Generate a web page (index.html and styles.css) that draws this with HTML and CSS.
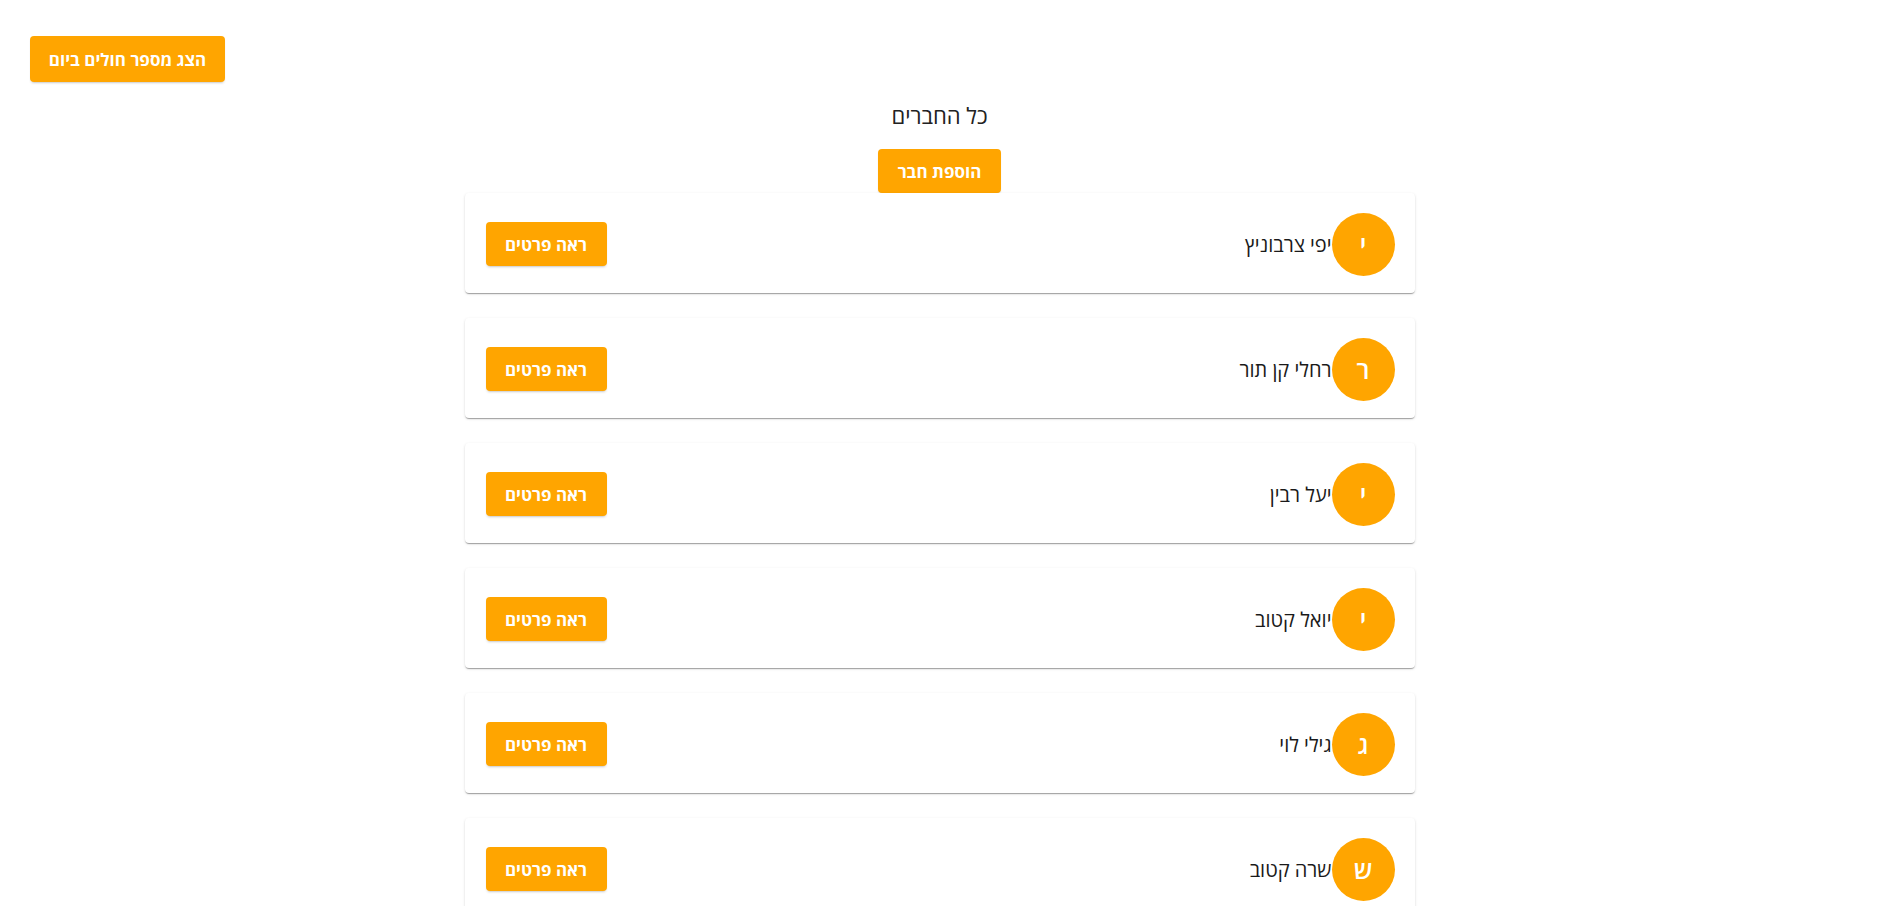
FILE: index.html
```html
<!DOCTYPE html>
<html lang="he" dir="rtl">
<head>
<meta charset="utf-8">
<title>כל החברים</title>
<link rel="stylesheet" href="styles.css">
</head>
<body>
<div class="topbar">
  <button class="btn btn-top">הצג מספר חולים ביום</button>
</div>
<main class="members">
  <h1 class="title">כל החברים</h1>
  <button class="btn btn-add">הוספת חבר</button>
  <ul class="list">
    <li class="card"><div class="who"><span class="avatar">י</span><span class="name">יפי צרבוניץ</span></div><button class="btn btn-details">ראה פרטים</button></li>
    <li class="card"><div class="who"><span class="avatar">ר</span><span class="name">רחלי קן תור</span></div><button class="btn btn-details">ראה פרטים</button></li>
    <li class="card"><div class="who"><span class="avatar">י</span><span class="name">יעל רבין</span></div><button class="btn btn-details">ראה פרטים</button></li>
    <li class="card"><div class="who"><span class="avatar">י</span><span class="name">יואל קטוב</span></div><button class="btn btn-details">ראה פרטים</button></li>
    <li class="card"><div class="who"><span class="avatar">ג</span><span class="name">גילי לוי</span></div><button class="btn btn-details">ראה פרטים</button></li>
    <li class="card"><div class="who"><span class="avatar">ש</span><span class="name">שרה קטוב</span></div><button class="btn btn-details">ראה פרטים</button></li>
  </ul>
</main>
</body>
</html>
```
FILE: styles.css
```css
html, body {
  margin: 0;
  padding: 0;
  background: #fff;
  overflow: hidden;
}
body {
  font-family: "Open Sans", "Liberation Sans", sans-serif;
  color: rgba(0, 0, 0, 0.87);
}
.topbar {
  display: flex;
  justify-content: flex-end;
  padding: 36px 30px 0 30px;
}
.btn {
  background: #ffa500;
  color: #fff;
  border: 0;
  border-radius: 4px;
  font-family: inherit;
  font-weight: 700;
  font-size: 17px;
  cursor: pointer;
  box-shadow: 0 3px 1px -2px rgba(0,0,0,0.1), 0 2px 2px 0 rgba(0,0,0,0.07);
}
.btn-top {
  width: 195px;
  height: 46px;
}
.members {
  display: flex;
  flex-direction: column;
  align-items: center;
}
.title {
  margin: 18px 0 0 0;
  font-size: 22px;
  font-weight: 400;
  line-height: 30px;
  color: #222;
}
.btn-add {
  margin-top: 19px;
  width: 123px;
  height: 44px;
}
.list {
  list-style: none;
  margin: 0;
  padding: 0;
  width: 950px;
  display: flex;
  flex-direction: column;
  gap: 25px;
}
.card {
  height: 100px;
  box-sizing: border-box;
  padding: 2px 20px 0 21px;
  display: flex;
  align-items: center;
  justify-content: space-between;
  background: #fff;
  border-radius: 4px;
  box-shadow: 0 2px 1px -1px rgba(0,0,0,0.2), 0 1px 1px 0 rgba(0,0,0,0.14), 0 1px 3px 0 rgba(0,0,0,0.12);
}
.who {
  display: flex;
  align-items: center;
}
.avatar {
  width: 63px;
  height: 63px;
  border-radius: 50%;
  background: #ffa500;
  color: #fff;
  display: flex;
  align-items: center;
  justify-content: center;
  font-size: 25px;
  font-weight: 600;
}
.name {
  font-size: 20px;
  color: #1a1a1a;
}
.btn-details {
  width: 121px;
  height: 44px;
}
```
